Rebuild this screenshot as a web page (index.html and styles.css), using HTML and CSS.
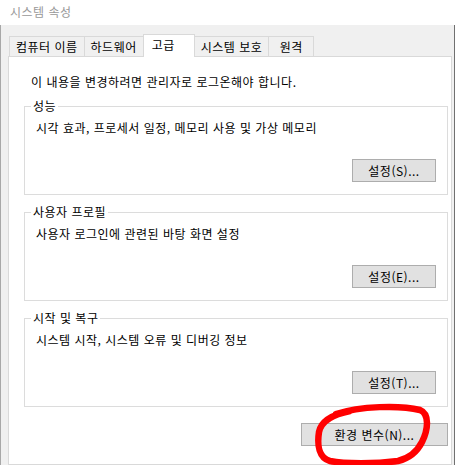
FILE: index.html
```html
<!DOCTYPE html>
<html lang="ko">
<head>
    <meta charset="UTF-8">
    <meta name="viewport" content="width=device-width, initial-scale=1.0">
    <title>시스템 속성</title>
    <link rel="stylesheet" href="styles.css">
</head>
<body>
    <div class="window">
        <div class="titlebar">시스템 속성</div>

        <div class="dialog">
            <div class="tabs">
                <div class="tab">컴퓨터 이름</div>
                <div class="tab">하드웨어</div>
                <div class="tab active">고급</div>
                <div class="tab">시스템 보호</div>
                <div class="tab">원격</div>
            </div>

            <div class="panel">
                <p class="notice">이 내용을 변경하려면 관리자로 로그온해야 합니다.</p>

                <fieldset class="group">
                    <legend>성능</legend>
                    <p class="group-text">시각 효과, 프로세서 일정, 메모리 사용 및 가상 메모리</p>
                    <div class="group-actions">
                        <button class="btn">설정(S)...</button>
                    </div>
                </fieldset>

                <fieldset class="group">
                    <legend>사용자 프로필</legend>
                    <p class="group-text">사용자 로그인에 관련된 바탕 화면 설정</p>
                    <div class="group-actions">
                        <button class="btn">설정(E)...</button>
                    </div>
                </fieldset>

                <fieldset class="group">
                    <legend>시작 및 복구</legend>
                    <p class="group-text">시스템 시작, 시스템 오류 및 디버깅 정보</p>
                    <div class="group-actions">
                        <button class="btn">설정(T)...</button>
                    </div>
                </fieldset>

                <div class="panel-actions">
                    <button class="btn btn-wide">환경 변수(N)...</button>
                </div>
            </div>
        </div>
    </div>

    <!-- red marker circle drawn over the button -->
    <svg class="marker" width="456" height="465" viewBox="0 0 456 465">
        <path d="M 336 414 C 360 406, 400 405, 420 410 C 430 414, 428 430, 422 442 C 417 452, 410 458, 398 461 C 375 464, 345 464, 330 461 C 319 458, 317 445, 319 432 C 321 422, 330 415, 350 411"
              fill="none" stroke="#f00" stroke-width="6.5" stroke-linecap="round" stroke-linejoin="round"/>
    </svg>
</body>
</html>
```

FILE: styles.css
```css
:root {
    --face: #f0f0f0;
    --tab-border: #d9d9d9;
    --group-border: #dcdcdc;
    --btn-face: #e1e1e1;
    --btn-border: #adadad;
}

* {
    box-sizing: border-box;
    margin: 0;
    padding: 0;
}

body {
    background: #fff;
    font-family: "Noto Sans CJK KR", "Noto Sans", sans-serif;
    font-size: 12px;
    letter-spacing: 0.5px;
    color: #000;
    overflow: hidden;
    height: 465px;
}

.window {
    width: 455px;
    height: 465px;
    display: flex;
    flex-direction: column;
}

.titlebar {
    height: 25px;
    line-height: 23px;
    padding-left: 10px;
    color: #999;
    background: #fff;
}

.dialog {
    flex: 1;
    background: var(--face);
    border-left: 1px solid #a8a8a8;
    border-right: 1px solid #707070;
    padding: 9px 2px 0 7px;
    display: flex;
    flex-direction: column;
}

.tabs {
    display: flex;
    align-items: flex-end;
    height: 22px;
    padding-left: 1px;
}

.tab {
    min-width: 46px;
    height: 20px;
    line-height: 19px;
    padding: 0 6px;
    text-align: center;
    background: var(--face);
    border: 1px solid var(--tab-border);
    border-bottom: none;
    margin-left: -1px;
}

.tab:first-child {
    margin-left: 0;
}

.tab.active {
    position: relative;
    z-index: 1;
    min-width: 52px;
    height: 23px;
    margin-bottom: -1px;
    padding: 0 6px 3px 8px;
    text-align: left;
    background: #fff;
}

.panel {
    flex: 1;
    background: #fff;
    border: 1px solid var(--tab-border);
    padding: 17px 3px 0 15px;
}

.notice {
    line-height: 16px;
    margin-left: 7px;
}

.group {
    margin-top: 8px;
    border: 1px solid var(--group-border);
    padding: 0 11px 12px 11px;
    min-width: 0;
}

.group + .group {
    margin-top: 9px;
}

.group legend {
    line-height: 16px;
    padding: 0 2px;
    margin-left: -5px;
}

.group-text {
    line-height: 16px;
    margin-top: 6px;
}

.group-actions,
.panel-actions {
    display: flex;
    justify-content: flex-end;
}

.group-actions {
    margin-top: 23px;
}

.panel-actions {
    margin-top: 16px;
}

.btn {
    min-width: 84px;
    height: 23px;
    padding: 0 8px;
    font-family: inherit;
    font-size: 12px;
    letter-spacing: inherit;
    color: #000;
    background: var(--btn-face);
    border: 1px solid var(--btn-border);
}

.btn-wide {
    width: 147px;
}

.marker {
    position: absolute;
    top: 0;
    left: 0;
    pointer-events: none;
}
```
